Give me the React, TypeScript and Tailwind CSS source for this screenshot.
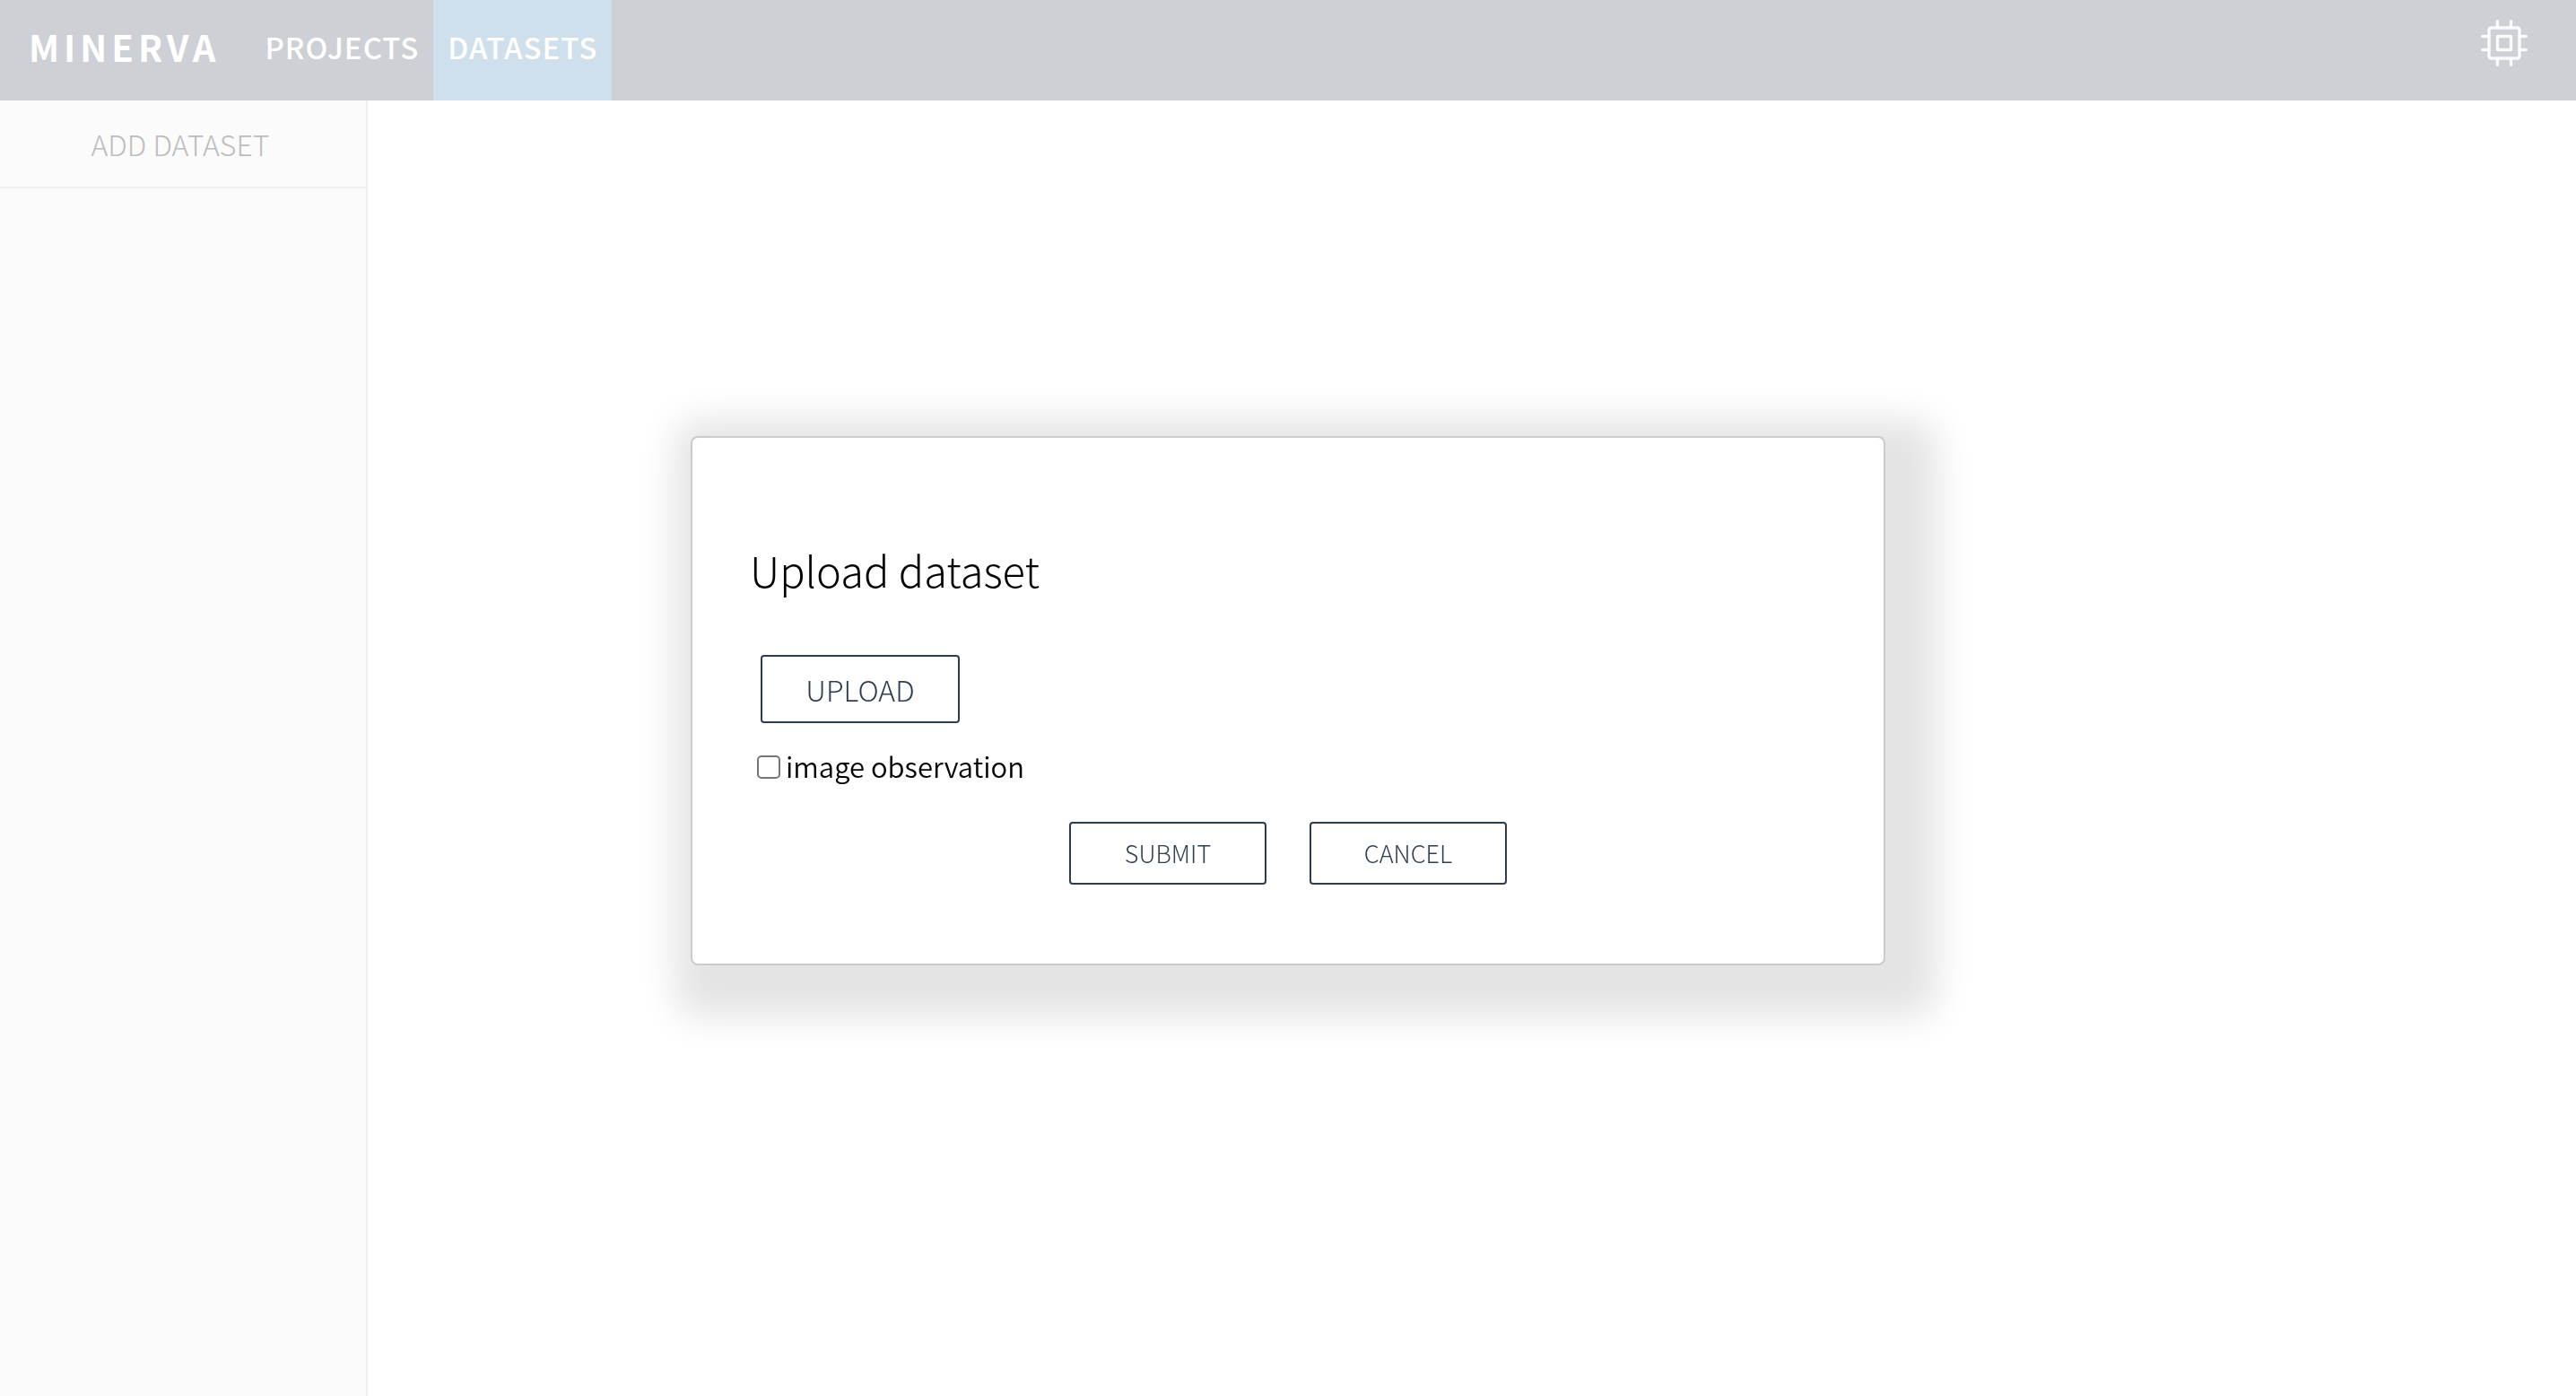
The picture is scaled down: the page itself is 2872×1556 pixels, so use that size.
import React from 'react';

function ChipIcon() {
  return (
    <svg viewBox="0 0 52 52" className="size-13" fill="none" stroke="currentColor" strokeWidth="3.4" strokeLinecap="round" strokeLinejoin="round" aria-hidden="true">
      <rect x="9" y="9" width="34" height="34" rx="2.5" />
      <rect x="18.5" y="18.5" width="15" height="15" />
      <path d="M18.5 9V1.8M33.5 9V1.8M18.5 43v7.2M33.5 43v7.2M9 18.5H1.8M9 33.5H1.8M43 18.5h7.2M43 33.5h7.2" />
    </svg>
  );
}

function Header() {
  return (
    <header className="flex h-28 items-stretch bg-[#cdd0d5] text-white">
      <a href="#home" className="flex items-center pr-[34px] pb-2 pl-8 text-[40px] font-bold tracking-[5px]">
        MINERVA
      </a>
      <nav className="flex items-stretch text-[33px] font-medium tracking-[1px]">
        <a href="#projects" className="flex items-center px-4 pb-1.5">PROJECTS</a>
        <a href="#datasets" aria-current="page" className="flex items-center bg-[#cfdfec] px-4 pb-1.5">DATASETS</a>
      </nav>
      <button type="button" aria-label="Compute" className="mt-[22px] mr-[54px] ml-auto self-start text-white/90">
        <ChipIcon />
      </button>
    </header>
  );
}

function Dialog() {
  return (
    <div className="fixed inset-0 flex items-center justify-center pt-[6px]">
      <form
        role="dialog"
        aria-labelledby="dialog-title"
        onSubmit={(e) => e.preventDefault()}
        className="w-full max-w-[1332px] rounded-[8px] border-2 border-[#cbcbcb] bg-white px-16 pt-[115px] pb-[88px] text-black shadow-[20px_20px_40px_38px_#e4e4e4]"
      >
        <h1 id="dialog-title" className="text-[47px] leading-16 font-light">Upload dataset</h1>
        <button type="button" className="mt-[63px] ml-3 block h-[76px] w-[222px] rounded-[4px] border-2 border-[#2f3d50] text-[32px] font-light text-[#2f3d50]">
          UPLOAD
        </button>
        <div className="mt-[25px] ml-2 flex h-12 items-center">
          <input id="image-observation" type="checkbox" className="size-[26px] appearance-none rounded-[5px] border-2 border-[#767676] bg-white" />
          <label htmlFor="image-observation" className="pb-0.5 pl-1.5 text-[31px] leading-12 font-[350]">image observation</label>
        </div>
        <div className="mt-[37px] flex justify-center gap-12 text-[27px] font-light text-[#2f3d50]">
          <button type="submit" className="h-[70px] w-[220px] rounded-[4px] border-2 border-[#2f3d50]">SUBMIT</button>
          <button type="button" className="h-[70px] w-[220px] rounded-[4px] border-2 border-[#2f3d50]">CANCEL</button>
        </div>
      </form>
    </div>
  );
}

export default function App() {
  return (
    <div className="flex min-h-screen flex-col bg-white font-['Noto_Sans_CJK_SC',sans-serif]">
      <Header />
      <div className="flex flex-1">
        <aside className="w-[410px] border-r-2 border-[#efefef] bg-[#fbfbfb]">
          <button type="button" className="h-[98px] w-full border-b-2 border-[#efefef] pr-1.5 text-[32px] font-light text-[#bdbdbd]">
            ADD DATASET
          </button>
        </aside>
        <main className="flex-1" />
      </div>
      <Dialog />
    </div>
  );
}
